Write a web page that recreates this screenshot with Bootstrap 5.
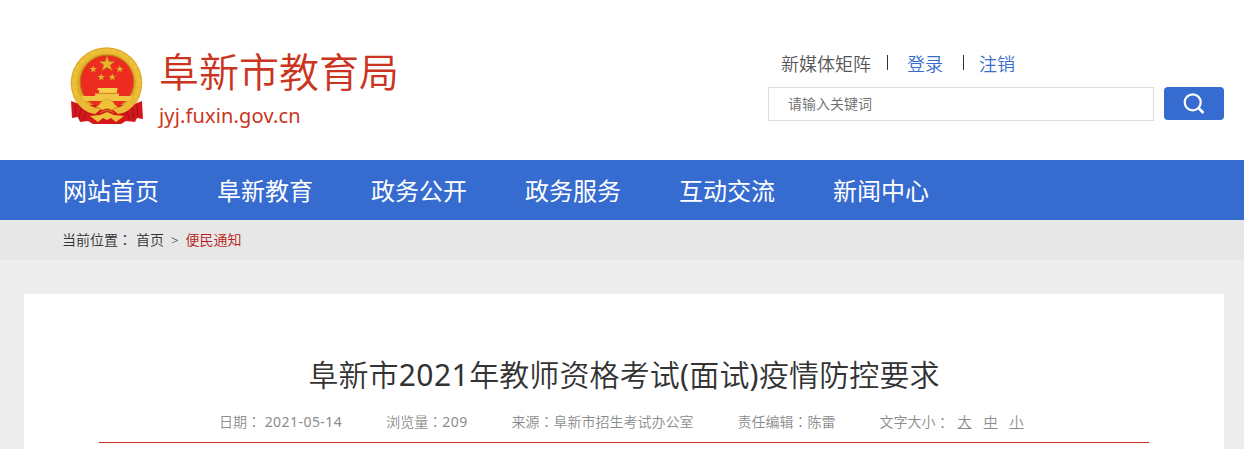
<!DOCTYPE html>
<html lang="zh-CN">
<head>
  <meta charset="UTF-8" />
  <meta name="viewport" content="width=device-width, initial-scale=1.0"/>
  <title>阜新市2021年教师资格考试(面试)疫情防控要求</title>
  <link rel="stylesheet" href="https://cdn.jsdelivr.net/npm/bootstrap@5.3.0/dist/css/bootstrap.min.css" />
  <style>
  body {
    background-color: #ededed;
    font-family: "Noto Sans", "Noto Sans CJK SC", sans-serif;
    font-weight: 400;
    font-size: 14px;
    color: #333;
  }
  .site-header {
    height: 160px;
    padding: 46px 20px 0 70px;
  }
  .site-name {
    color: #cb3420;
    padding: 2px 0 0 15px;
  }
  .site-title {
    font-size: 40px;
    font-weight: 350;
    line-height: 48px;
  }
  .site-url {
    font-size: 20px;
    line-height: 28px;
    margin-top: 6px;
    letter-spacing: 0.15px;
  }
  .header-tools {
    width: 456px;
  }
  .top-links {
    font-size: 18px;
    font-weight: 350;
    line-height: 24px;
    color: #555;
    padding: 6px 0 0 13px;
    height: 41px;
  }
  .top-links a {
    color: #366bd0;
    text-decoration: none;
  }
  .divider {
    width: 1px;
    height: 15px;
    background-color: #333;
    margin-top: 3px;
  }
  .search-input {
    height: 34px;
    border: 1px solid #ddd;
    border-radius: 0;
    padding: 0 20px 2px 19px;
    font-size: 14px;
    font-weight: 350;
  }
  .search-input::placeholder {
    color: #6c6c6c;
  }
  .search-btn {
    width: 60px;
    height: 33px;
    background-color: #366bd0;
    border-radius: 4px;
  }
  .main-nav {
    height: 60px;
    background-color: #366bd0;
    padding-left: 63px;
    gap: 58px;
  }
  .main-nav a {
    color: #fff;
    font-size: 24px;
    line-height: 61px;
    text-decoration: none;
  }
  .crumbs {
    height: 40px;
    line-height: 40px;
    background-color: #e7e7e7;
    padding-left: 62px;
    font-weight: 350;
  }
  .crumbs a {
    color: #333;
    text-decoration: none;
  }
  .crumbs .current {
    color: #b81c22;
  }
  .article {
    margin: 34px 20px 0 24px;
    padding: 60px 75px 0;
    height: 155px;
  }
  .article-title {
    font-size: 30px;
    font-weight: 350;
    line-height: 42px;
    letter-spacing: 0.1px;
    margin: 0;
  }
  .article-meta {
    color: #8c8c8c;
    font-weight: 350;
    line-height: 20px;
    height: 47px;
    padding: 16px 0 0 120px;
    gap: 44px;
    border-bottom: 1px solid #cb3420;
  }
  .article-meta a {
    color: #8c8c8c;
    margin-right: 12px;
  }
  .num {
    font-weight: 400;
    letter-spacing: 0.45px;
  }
  .colon {
    font-family: "Noto Sans CJK TC", sans-serif;
    line-height: 1;
  }
  .article-meta .d-flex .colon {
    line-height: 20px;
  }
</style>
</head>
<body>

  <!-- Header -->
  <header class="site-header bg-white d-flex justify-content-between">
    <div class="d-flex">
      <svg width="74" height="80" viewBox="0 0 74 80">
        <circle cx="36.5" cy="37" r="35.8" fill="#dfa826"/>
        <circle cx="36.5" cy="37" r="32" fill="none" stroke="#eabb34" stroke-width="5"/>
        <circle cx="36.5" cy="37" r="33" fill="none" stroke="#f0c63e" stroke-width="2" stroke-dasharray="3 4"/>
        <circle cx="37" cy="36" r="26.8" fill="#ed2b20" stroke="#b97812" stroke-width="1"/>
        <g fill="#e8b62c" stroke="#b8741a" stroke-width=".5">
          <path id="star" d="M37 10l2 5.4 5.9.1-4.7 3.4 1.8 5.7-5-3.4-5 3.4 1.8-5.7-4.7-3.4 5.9-.1z"/>
          <use href="#star" transform="translate(5.5 14.5) scale(.48)"/>
          <use href="#star" transform="translate(32 14.5) scale(.48)"/>
          <use href="#star" transform="translate(13.5 22.5) scale(.48)"/>
          <use href="#star" transform="translate(24.5 22.5) scale(.48)"/>
        </g>
        <path d="M28 42h19l1 2h-1v3h-18v-3h-2z" fill="#f5cf4c"/>
        <path d="M25 47.5h24v2.5h13l-2 5H14l-3-5h14z" fill="#f0c544"/>
        <path d="M28 47.3h18" stroke="#d78b1c"/>
        <path d="M1 55l11 4 12 0 13 2 13-2 12 0 10-4 1 18-6-1-2 4-9-1-5 3H23l-5-3-8 1-2-5-6 1z" fill="#d4171b"/>
        <path d="M6 59l-1 11M11 61l-2 12M17 64l-4 10M67 59l1 11M62 61l2 12M56 64l4 10" stroke="#9c1118" fill="none"/>
        <!-- gear and wheat knot -->
        <path d="M3 50q8 16 22 18l6-5q-12-2-19-10zM70 50q-8 16-22 18l-6-5q12-2 19-10z" fill="#eaba34"/>
        <path d="M26 61q4-2 5-5 6-5 12 0 1 3 5 5-4 1-6 3-5-3-10 0-2-2-6-3z" fill="#f0c23a" stroke="#cf9424" stroke-width=".6"/>
        <path d="M20 70l10-1 7-3 7 3 10 1-8 6-5-4-4 2-4-2-5 4z" fill="#f0c23a"/>
        <path d="M30 67q7-5 14 0" fill="none" stroke="#c98617"/>
      </svg>
      <div class="site-name">
        <div class="site-title">阜新市教育局</div>
        <div class="site-url">jyj.fuxin.gov.cn</div>
      </div>
    </div>
    <div class="header-tools">
      <div class="top-links d-flex">
        <span>新媒体矩阵</span>
        <span class="divider ms-3"></span>
        <a href="#" style="margin-left: 19px">登录</a>
        <span class="divider" style="margin-left: 20px"></span>
        <a href="#" style="margin-left: 15px">注销</a>
      </div>
      <form class="d-flex">
        <input type="text" class="form-control search-input" placeholder="请输入关键词" />
        <button type="button" class="btn search-btn p-0 flex-shrink-0 d-flex justify-content-center align-items-center" style="margin-left: 10px">
          <svg width="22" height="22" viewBox="0 0 22 22" fill="none" stroke="#fff" stroke-width="2.2">
            <circle cx="9.7" cy="9.3" r="8"/>
            <path d="M15 14.5l5.5 5.5" stroke-width="2.6"/>
          </svg>
        </button>
      </form>
    </div>
  </header>

  <!-- Main nav -->
  <nav class="main-nav d-flex">
    <a href="#">网站首页</a>
    <a href="#">阜新教育</a>
    <a href="#">政务公开</a>
    <a href="#">政务服务</a>
    <a href="#">互动交流</a>
    <a href="#">新闻中心</a>
  </nav>

  <!-- Current position -->
  <div class="crumbs d-flex">
    <span>当前位置<span class="colon" lang="zh-TW">：</span></span>
    <a href="#" class="ms-1">首页</a>
    <span style="margin: 0 7px; font-size: 13px">&gt;</span>
    <a href="#" class="current">便民通知</a>
  </div>

  <!-- Article -->
  <main class="article bg-white">
    <h1 class="article-title text-center">阜新市<span class="num">2021</span>年教师资格考试<span class="num">(</span>面试<span class="num">)</span>疫情防控要求</h1>
    <div class="article-meta d-flex text-nowrap">
      <span>日期<span class="colon" lang="zh-TW">：</span> <span class="num">2021-05-14</span></span>
      <span>浏览量<span class="colon" lang="zh-TW">：</span><span class="num">209</span></span>
      <span>来源<span class="colon" lang="zh-TW">：</span>阜新市招生考试办公室</span>
      <span>责任编辑<span class="colon" lang="zh-TW">：</span>陈雷</span>
      <span class="d-flex">文字大小<span class="colon me-2" lang="zh-TW">：</span><a href="#">大</a><a href="#">中</a><a href="#">小</a></span>
    </div>
  </main>

  <script src="https://cdn.jsdelivr.net/npm/bootstrap@5.3.0/dist/js/bootstrap.bundle.min.js"></script>
</body>
</html>
